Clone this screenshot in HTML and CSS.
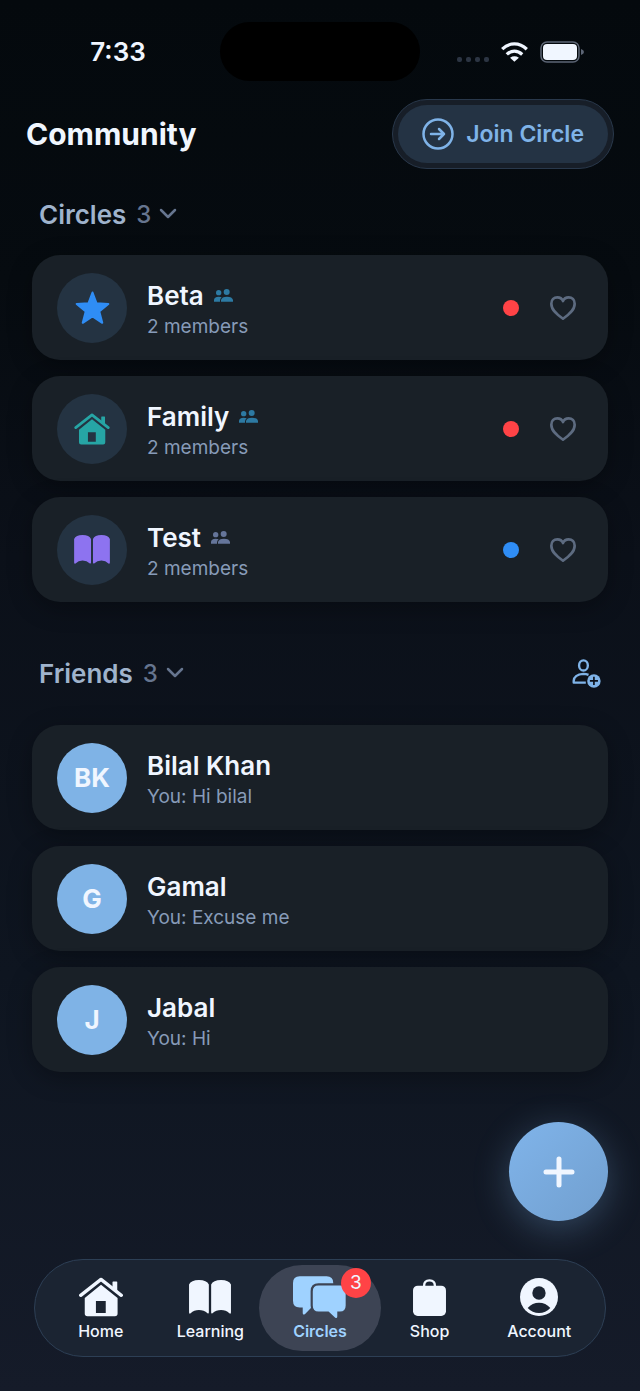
FILE: index.html
```html
<!DOCTYPE html>
<html lang="en">
<head>
  <meta charset="UTF-8">
  <meta name="viewport" content="width=device-width, initial-scale=1.0">
  <title>Community</title>
  <link rel="stylesheet" href="styles.css">
</head>
<body>
  <!-- shared icons -->
  <svg class="sprite" aria-hidden="true">
    <symbol id="house" viewBox="0 0 130 118">
      <path d="M5 54L65 7l60 47" fill="none" stroke="currentColor" stroke-width="10" stroke-linecap="round" stroke-linejoin="round"/>
      <path d="M99 15q0-2 2-2h10q2 0 2 2v29L99 33z"/>
      <path fill-rule="evenodd" d="M65 23l49 39v46q0 8-8 8H25q-8 0-8-8V62zM50 71v35h29V71z"/>
    </symbol>
    <symbol id="book" viewBox="0 0 127 103">
      <path d="M0 14Q6 0 30 0t30 14v84q0 5-4 3-11-10-26-10T5 101q-5 3-5-3z"/>
      <path d="M67 14Q73 0 97 0t30 14v84q0 6-5 3-10-10-25-10t-26 10q-4 2-4-3z"/>
    </symbol>
    <symbol id="people" viewBox="0 0 57 39">
      <circle cx="14" cy="11" r="8"/>
      <circle cx="38" cy="9" r="9"/>
      <path d="M0 38v-5q0-9 14-10 6 0 9 2-5 4-5 10v3z"/>
      <path d="M21 38v-5q2-10 18-10t18 10v5z"/>
    </symbol>
    <symbol id="chevron" viewBox="0 0 18 12">
      <path d="M2 2l7 7 7-7" fill="none" stroke="currentColor" stroke-width="2.5" stroke-linecap="round" stroke-linejoin="round"/>
    </symbol>
    <symbol id="heart" viewBox="0 0 78 72">
      <path d="M39 68C25 58 4 44 4 23 4 11 12 4 22 4c8 0 14 4 17 11 3-7 9-11 17-11 10 0 18 7 18 19 0 21-21 35-35 45z" fill="none" stroke="currentColor" stroke-width="8" stroke-linejoin="round"/>
    </symbol>
  </svg>

  <div class="status-bar">
    <span class="time">7:33</span>
    <div class="island"></div>
    <div class="indicators">
      <div class="signal"><i></i><i></i><i></i><i></i></div>
      <svg width="27" height="20" viewBox="0 0 81 61" fill="none" stroke="#f0f6ff" stroke-width="10">
        <path d="M3 22Q19 6 40 6t38 16"/>
        <path d="M17 38q10-10 23-10t24 10"/>
        <path d="M40 60L27 48q13-9 27 0z" fill="#f0f6ff" stroke="none"/>
      </svg>
      <svg width="44" height="22" viewBox="0 0 44 22">
        <rect x="1" y="1" width="38" height="20" rx="6" fill="none" stroke="#5c6575" stroke-width="1.5"/>
        <rect x="3" y="3" width="34" height="16" rx="4" fill="#f0f6ff"/>
        <path d="M41 8q3 1 3 3t-3 3z" fill="#5c6575"/>
      </svg>
    </div>
  </div>

  <header>
    <h1>Community</h1>
    <div class="join-ring">
      <button class="join">
        <svg width="32" height="32" viewBox="0 0 32 32" fill="none" stroke="currentColor" stroke-width="2.5" stroke-linecap="round" stroke-linejoin="round">
          <circle cx="16" cy="16" r="14.5"/>
          <path d="M9 16h13M17 11l5 5-5 5"/>
        </svg>
        Join Circle
      </button>
    </div>
  </header>

  <main>
    <section>
      <div class="section-head">
        <h2>Circles</h2>
        <span class="count">3</span>
        <svg class="chevron"><use href="#chevron"/></svg>
      </div>
      <div class="list">
        <div class="card">
          <div class="avatar circle beta">
            <svg width="35" height="34" viewBox="0 0 104 100"><path d="M52 4l12 32 35 2-27 22 9 34-29-19-29 19 9-34L5 38l35-2z" stroke="currentColor" stroke-width="6" stroke-linejoin="round"/></svg>
          </div>
          <div class="info">
            <h3>Beta <svg class="people blue"><use href="#people"/></svg></h3>
            <p>2 members</p>
          </div>
          <span class="dot red"></span>
          <button class="like" aria-label="Favorite Beta"><svg><use href="#heart"/></svg></button>
        </div>
        <div class="card">
          <div class="avatar circle family">
            <svg width="36" height="32"><use href="#house"/></svg>
          </div>
          <div class="info">
            <h3>Family <svg class="people blue"><use href="#people"/></svg></h3>
            <p>2 members</p>
          </div>
          <span class="dot red"></span>
          <button class="like" aria-label="Favorite Family"><svg><use href="#heart"/></svg></button>
        </div>
        <div class="card">
          <div class="avatar circle test">
            <svg width="36" height="29"><use href="#book"/></svg>
          </div>
          <div class="info">
            <h3>Test <svg class="people"><use href="#people"/></svg></h3>
            <p>2 members</p>
          </div>
          <span class="dot"></span>
          <button class="like" aria-label="Favorite Test"><svg><use href="#heart"/></svg></button>
        </div>
      </div>
    </section>

    <section class="friends">
      <div class="section-head">
        <h2>Friends</h2>
        <span class="count">3</span>
        <svg class="chevron"><use href="#chevron"/></svg>
        <button class="add-friend" aria-label="Add friend">
          <svg width="29" height="29" viewBox="0 0 86 86" fill="none" stroke="currentColor" stroke-width="7">
            <ellipse cx="34" cy="19" rx="13" ry="15"/>
            <path d="M49 47q-7-3-15-3Q6 46 5 65v5h36" stroke-linejoin="round"/>
            <circle cx="65" cy="65" r="20" fill="currentColor" stroke="none"/>
            <path d="M65 53v24M53 65h24" stroke="#0d121b" stroke-width="5"/>
          </svg>
        </button>
      </div>
      <div class="list">
        <div class="card">
          <div class="avatar">BK</div>
          <div class="info">
            <h3>Bilal Khan</h3>
            <p>You: Hi bilal</p>
          </div>
        </div>
        <div class="card">
          <div class="avatar">G</div>
          <div class="info">
            <h3>Gamal</h3>
            <p>You: Excuse me</p>
          </div>
        </div>
        <div class="card">
          <div class="avatar">J</div>
          <div class="info">
            <h3>Jabal</h3>
            <p>You: Hi</p>
          </div>
        </div>
      </div>
    </section>
  </main>

  <button class="fab" aria-label="New">
    <svg width="32" height="32" viewBox="0 0 32 32"><path d="M16 3v26M3 16h26" stroke="#f0f6ff" stroke-width="5" stroke-linecap="round"/></svg>
  </button>

  <nav>
    <a href="#">
      <span class="icon"><svg width="44" height="40"><use href="#house"/></svg></span>
      Home
    </a>
    <a href="#">
      <span class="icon"><svg width="42" height="34"><use href="#book"/></svg></span>
      Learning
    </a>
    <a href="#" class="active">
      <span class="icon">
        <svg width="53" height="43" viewBox="0 0 158 128">
          <path d="M20 1h80q20 0 20 20v53q0 20-20 20H55L36 113q-7 5-7-3V94h-9Q0 94 0 74V21Q0 1 20 1z"/>
          <path d="M76 28h64q17 0 17 17v43q0 18-17 18h-8v15q0 7-6 3l-20-18H76q-17 0-17-18V45q0-17 17-17z" stroke="#3d4454" stroke-width="13" paint-order="stroke"/>
        </svg>
      </span>
      Circles
      <span class="badge">3</span>
    </a>
    <a href="#">
      <span class="icon">
        <svg width="33" height="37" viewBox="0 0 98 110">
          <path d="M33 24v-4q0-16 16-16t16 16v4" fill="none" stroke="currentColor" stroke-width="7"/>
          <rect y="20" width="98" height="90" rx="14"/>
        </svg>
      </span>
      Shop
    </a>
    <a href="#">
      <span class="icon">
        <svg width="38" height="38" viewBox="0 0 114 114">
          <circle cx="57" cy="57" r="57"/>
          <circle cx="57" cy="45" r="20" fill="#1b2432"/>
          <path d="M23 90q14-16 34-16t34 16q-14 15-34 15T23 90z" fill="#1b2432"/>
        </svg>
      </span>
      Account
    </a>
  </nav>
</body>
</html>
```
FILE: styles.css
```css
* {
  box-sizing: border-box;
}
body {
  margin: 0;
  min-height: 100vh;
  display: flex;
  flex-direction: column;
  font-family: Inter, "Liberation Sans", sans-serif;
  color: #f0f6ff;
  fill: currentColor;
  background: linear-gradient(#04090d 0%, #060b10 20%, #0b1019 40%, #0e1520 70%, #151b29 100%);
}
h1, h2, h3, p {
  margin: 0;
  font-weight: 600;
}
button {
  padding: 0;
  border: none;
  background: none;
  font-family: inherit;
  color: inherit;
  cursor: pointer;
}
svg {
  display: block;
}
.sprite {
  display: none;
}

.status-bar {
  display: grid;
  grid-template-columns: 1fr 200px 1fr;
  align-items: center;
  padding-top: 22px;
}
.time {
  padding-left: 16px;
  text-align: center;
  font-size: 26px;
  font-weight: 600;
}
.island {
  height: 59px;
  border-radius: 30px;
  background: #000;
}
.indicators {
  display: flex;
  align-items: center;
  justify-content: flex-end;
  gap: 12px;
  padding-right: 56px;
}
.signal {
  display: flex;
  gap: 4px;
  padding-top: 15px;
}
.signal i {
  width: 5px;
  height: 5px;
  border-radius: 2px;
  background: #2c3543;
}

header {
  display: flex;
  justify-content: space-between;
  align-items: center;
  padding: 18px 26px 0;
}
h1 {
  font-size: 30px;
  font-weight: 700;
}
.join-ring {
  padding: 5px;
  border: 1px solid #29384b;
  border-radius: 35px;
  background: #171e28;
}
.join {
  display: flex;
  align-items: center;
  gap: 12px;
  height: 58px;
  padding: 0 24px;
  border-radius: 29px;
  background: #243344;
  color: #7fb3e8;
  font-size: 23px;
  font-weight: 600;
}

main {
  padding: 20px 32px 50px;
}
.section-head {
  display: flex;
  align-items: center;
  height: 50px;
  margin-bottom: 16px;
  padding: 0 7px;
}
.friends .section-head {
  height: 72px;
  margin-top: 35px;
}
h2 {
  font-size: 26px;
  color: #9fb3cc;
}
.count {
  margin: 0 8px 0 10px;
  font-size: 24px;
  font-weight: 500;
  color: #66758f;
}
.chevron {
  width: 18px;
  height: 12px;
  color: #66758f;
}
.add-friend {
  margin-left: auto;
  color: #7fb3e8;
}

.list {
  display: flex;
  flex-direction: column;
  gap: 16px;
}
.card {
  display: flex;
  align-items: center;
  height: 105px;
  padding: 0 32px 0 25px;
  border-radius: 28px;
  background: #192027;
  box-shadow: 0 6px 24px rgba(0, 0, 0, 0.3);
}
.avatar {
  display: flex;
  align-items: center;
  justify-content: center;
  width: 70px;
  height: 70px;
  margin-right: 20px;
  border-radius: 50%;
  background: #7fb3e6;
  font-size: 26px;
  font-weight: 700;
}
.avatar.circle {
  background: #243342;
}
.beta {
  color: #2f8df5;
}
.family {
  color: #26a5a5;
}
.test {
  color: #8d73f0;
}
.info {
  flex: 1;
  padding-top: 6px;
}
h3 {
  display: flex;
  align-items: center;
  gap: 10px;
  font-size: 26px;
  line-height: 32px;
}
.info p {
  font-size: 19px;
  font-weight: 400;
  line-height: 30px;
  color: #879bb8;
}
.people {
  width: 19px;
  height: 13px;
  color: #65759a;
}
.people.blue {
  color: #2d7aa3;
}
.dot {
  width: 16px;
  height: 16px;
  margin-right: 31px;
  border-radius: 50%;
  background: #2f8df5;
}
.dot.red {
  background: #ff4346;
}
.like {
  color: #5d6b80;
}
.like svg {
  width: 26px;
  height: 24px;
}

.fab {
  display: flex;
  align-items: center;
  justify-content: center;
  align-self: flex-end;
  width: 99px;
  height: 99px;
  margin: 0 32px 38px;
  border-radius: 50%;
  background: linear-gradient(135deg, #80b4ea, #719fcf);
  box-shadow: 0 8px 36px rgba(127, 179, 232, 0.3);
}

nav {
  display: grid;
  grid-template-columns: repeat(5, 1fr);
  height: 98px;
  margin: auto 34px 34px;
  padding: 5px 11px;
  border: 1px solid #2d3f55;
  border-radius: 49px;
  background: #1b2432;
}
nav a {
  position: relative;
  display: flex;
  flex-direction: column;
  align-items: center;
  justify-content: flex-end;
  gap: 3px;
  padding-bottom: 10px;
  font-size: 16px;
  font-weight: 500;
  line-height: 20px;
  color: #f0f6ff;
  text-decoration: none;
}
nav .icon {
  display: flex;
  align-items: center;
  height: 42px;
}
nav .active {
  margin: 0 -6px;
  border-radius: 43px;
  background: #3d4454;
  color: #9fd2ff;
  font-weight: 600;
}
.badge {
  position: absolute;
  top: 3px;
  right: 10px;
  width: 30px;
  height: 30px;
  border-radius: 50%;
  background: #ff4346;
  color: #f0f6ff;
  font-size: 19px;
  font-weight: 400;
  line-height: 30px;
  text-align: center;
}
```
